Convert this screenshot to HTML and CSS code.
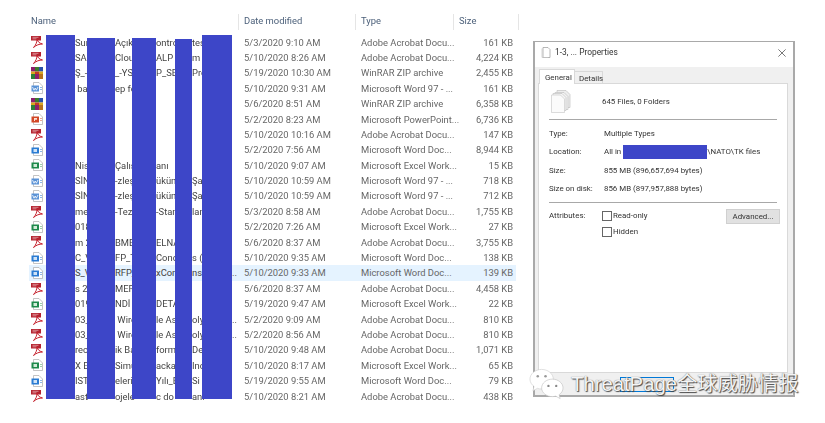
FILE: index.html
```html
<!DOCTYPE html>
<html lang="en">
<head>
	<meta charset="utf-8">
	<title>1-3, ... Properties</title>
	<link rel="stylesheet" href="styles.css">
</head>
<body>
	<svg class="defs" width="0" height="0">
		<symbol id="pdf" viewBox="0 0 12 12">
			<path d="M0 0h10v4.500H0z" fill="#b5232f"/>
			<path d="M1.500 1.300h6M1.500 2.800h4" stroke="#e8b4b8" stroke-width=".7"/>
			<path d="M6 3c0 3-1 6-3.500 8.500 3-2.500 5.500-3.500 9-3.500-3.500-1-4.500-2-5.500-5z" fill="none" stroke="#c4202c" stroke-width="1"/>
		</symbol>
		<symbol id="rar" viewBox="0 0 12 12">
			<path d="M0 0h4v4.500H0z" fill="#8c1f6e"/>
			<path d="M4 0h4v4.500H4z" fill="#3a7d2c"/>
			<path d="M8 0h4v4.500H8z" fill="#2a4fa8"/>
			<path d="M0 4.500h4v2.500H0zM8 4.500h4v2.500H8z" fill="#d9a521"/>
			<path d="M4 4.500h4v2.500H4z" fill="#c23a22"/>
			<path d="M0 7h4v5H0z" fill="#2d7f3a"/>
			<path d="M4 7h4v5H4z" fill="#8c1f6e"/>
			<path d="M8 7h4v5H8z" fill="#b8701c"/>
		</symbol>
		<symbol id="doc" viewBox="0 0 12 12">
			<path d="M2.500.500h5.500l3.500 3.500v7.500h-9z" fill="#fff" stroke="#aaa" stroke-width=".7"/>
			<path d="M.5 3.500h7.500v6H.5z" fill="#2b7cd3"/>
			<path d="M9 5h2v1H9zM9 7h2v1H9z" fill="#8db9e8"/>
			<path d="M2.500 5h3.500v3H2.500z" fill="#cfe3f7"/>
		</symbol>
		<symbol id="doc97" viewBox="0 0 12 12">
			<path d="M2.500.500h5.500l3.500 3.500v7.500h-9z" fill="#fff" stroke="#aaa" stroke-width=".7"/>
			<path d="M.5 3.500h7.500v6H.5z" fill="#5b93d6"/>
			<path d="M1.500 5l1.500 3.200 1.200-2.200 1.200 2.200L7 5" fill="none" stroke="#fff" stroke-width=".8"/>
			<path d="M9 5h2v1H9zM9 7h2v1H9z" fill="#8db9e8"/>
		</symbol>
		<symbol id="xls" viewBox="0 0 12 12">
			<path d="M2.500.500h5.500l3.500 3.500v7.500h-9z" fill="#fff" stroke="#aaa" stroke-width=".7"/>
			<path d="M.5 3.500h7.500v6H.5z" fill="#1f8a4c"/>
			<path d="M2.500 5h3.500v3H2.500z" fill="#d3ecd9"/>
			<path d="M9 5h2v1H9zM9 7h2v1H9z" fill="#9ccfa9"/>
		</symbol>
		<symbol id="ppt" viewBox="0 0 12 12">
			<path d="M2.500.500h5.500l3.500 3.500v7.500h-9z" fill="#fff" stroke="#aaa" stroke-width=".7"/>
			<path d="M.5 3.500h7.500v6H.5z" fill="#d24726"/>
			<path d="M3 5h3v1.700H4V8H3z" fill="#fbe0d8"/>
			<path d="M9 5h2v1H9zM9 7h2v1H9z" fill="#eba793"/>
		</symbol>
	</svg>

	<div class="page">
		<section class="explorer">
			<div class="heads">
				<div class="head">Name</div>
				<div class="head">Date modified</div>
				<div class="head">Type</div>
				<div class="head">Size</div>
			</div>

			<div class="row"><svg class="ico"><use href="#pdf"/></svg><div class="name"><span>Sur</span><span>Açıkl</span><span>ontrol</span><span>tes</span><span></span></div><div>5/3/2020 9:10 AM</div><div>Adobe Acrobat Docu...</div><div class="num">161 KB</div></div>
			<div class="row"><svg class="ico"><use href="#pdf"/></svg><div class="name"><span>SAN</span><span>Clou</span><span>ALP S</span><span>m</span><span></span></div><div>5/10/2020 8:26 AM</div><div>Adobe Acrobat Docu...</div><div class="num">4,224 KB</div></div>
			<div class="row"><svg class="ico"><use href="#rar"/></svg><div class="name"><span>Ş_-_</span><span>_-YSK</span><span>P_SEÇ</span><span>Pro</span><span></span></div><div>5/19/2020 10:30 AM</div><div>WinRAR ZIP archive</div><div class="num">2,455 KB</div></div>
			<div class="row"><svg class="ico"><use href="#doc97"/></svg><div class="name"><span>&nbsp;ba</span><span>ep fo</span><span></span><span></span><span></span></div><div>5/10/2020 9:31 AM</div><div>Microsoft Word 97 - ...</div><div class="num">161 KB</div></div>
			<div class="row"><svg class="ico"><use href="#rar"/></svg><div class="name"><span></span><span></span><span></span><span></span><span></span></div><div>5/6/2020 8:51 AM</div><div>WinRAR ZIP archive</div><div class="num">6,358 KB</div></div>
			<div class="row"><svg class="ico"><use href="#ppt"/></svg><div class="name"><span></span><span></span><span></span><span></span><span></span></div><div>5/2/2020 8:23 AM</div><div>Microsoft PowerPoint...</div><div class="num">6,736 KB</div></div>
			<div class="row"><svg class="ico"><use href="#pdf"/></svg><div class="name"><span></span><span></span><span></span><span></span><span></span></div><div>5/10/2020 10:16 AM</div><div>Adobe Acrobat Docu...</div><div class="num">147 KB</div></div>
			<div class="row"><svg class="ico"><use href="#doc"/></svg><div class="name"><span></span><span></span><span></span><span></span><span></span></div><div>5/2/2020 7:56 AM</div><div>Microsoft Word Doc...</div><div class="num">8,944 KB</div></div>
			<div class="row"><svg class="ico"><use href="#xls"/></svg><div class="name"><span>Nisa</span><span>Çalışm</span><span>anı</span><span></span><span></span></div><div>5/10/2020 9:07 AM</div><div>Microsoft Excel Work...</div><div class="num">15 KB</div></div>
			<div class="row"><svg class="ico"><use href="#doc97"/></svg><div class="name"><span>SİN</span><span>-zleşı</span><span>ükün</span><span>Şa</span><span></span></div><div>5/10/2020 10:59 AM</div><div>Microsoft Word 97 - ...</div><div class="num">718 KB</div></div>
			<div class="row"><svg class="ico"><use href="#doc97"/></svg><div class="name"><span>SİN</span><span>-zleşı</span><span>ükün</span><span>Şa</span><span></span></div><div>5/10/2020 10:59 AM</div><div>Microsoft Word 97 - ...</div><div class="num">712 KB</div></div>
			<div class="row"><svg class="ico"><use href="#pdf"/></svg><div class="name"><span>me</span><span>-Tez</span><span>-Stan</span><span>lan</span><span></span></div><div>5/3/2020 8:58 AM</div><div>Adobe Acrobat Docu...</div><div class="num">1,755 KB</div></div>
			<div class="row"><svg class="ico"><use href="#xls"/></svg><div class="name"><span>018</span><span></span><span></span><span></span><span></span></div><div>5/2/2020 7:26 AM</div><div>Microsoft Excel Work...</div><div class="num">27 KB</div></div>
			<div class="row"><svg class="ico"><use href="#pdf"/></svg><div class="name"><span>m 2</span><span>BME</span><span>ELNA</span><span></span><span></span></div><div>5/6/2020 8:37 AM</div><div>Adobe Acrobat Docu...</div><div class="num">3,755 KB</div></div>
			<div class="row"><svg class="ico"><use href="#doc"/></svg><div class="name"><span>C_V</span><span>FP_Te</span><span>Cond</span><span>s (</span><span></span></div><div>5/10/2020 9:35 AM</div><div>Microsoft Word Doc...</div><div class="num">138 KB</div></div>
			<div class="row hover"><svg class="ico"><use href="#doc"/></svg><div class="name"><span>S_V</span><span>RFP_T</span><span>xCon</span><span>ns</span><span>..</span></div><div>5/10/2020 9:33 AM</div><div>Microsoft Word Doc...</div><div class="num">139 KB</div></div>
			<div class="row"><svg class="ico"><use href="#pdf"/></svg><div class="name"><span>s 20</span><span>MER</span><span></span><span></span><span></span></div><div>5/6/2020 8:37 AM</div><div>Adobe Acrobat Docu...</div><div class="num">4,458 KB</div></div>
			<div class="row"><svg class="ico"><use href="#xls"/></svg><div class="name"><span>019</span><span>NDİ</span><span>DETAY</span><span></span><span></span></div><div>5/19/2020 9:47 AM</div><div>Microsoft Excel Work...</div><div class="num">22 KB</div></div>
			<div class="row"><svg class="ico"><use href="#pdf"/></svg><div class="name"><span>03_</span><span>&nbsp;Wire</span><span>le As</span><span>oly</span><span>..</span></div><div>5/2/2020 9:09 AM</div><div>Adobe Acrobat Docu...</div><div class="num">810 KB</div></div>
			<div class="row"><svg class="ico"><use href="#pdf"/></svg><div class="name"><span>03_</span><span>&nbsp;Wire</span><span>le As</span><span>oly</span><span>..</span></div><div>5/2/2020 8:56 AM</div><div>Adobe Acrobat Docu...</div><div class="num">810 KB</div></div>
			<div class="row"><svg class="ico"><use href="#pdf"/></svg><div class="name"><span>rece</span><span>ik Ba</span><span>forma</span><span>Değ</span><span></span></div><div>5/10/2020 9:48 AM</div><div>Adobe Acrobat Docu...</div><div class="num">1,071 KB</div></div>
			<div class="row"><svg class="ico"><use href="#xls"/></svg><div class="name"><span>X E</span><span>Simu</span><span>ackag</span><span>Inc</span><span></span></div><div>5/10/2020 8:17 AM</div><div>Microsoft Excel Work...</div><div class="num">65 KB</div></div>
			<div class="row"><svg class="ico"><use href="#doc"/></svg><div class="name"><span>IST</span><span>eleri_</span><span>Yılı_Bi</span><span>Si</span><span></span></div><div>5/19/2020 9:55 AM</div><div>Microsoft Word Doc...</div><div class="num">79 KB</div></div>
			<div class="row"><svg class="ico"><use href="#pdf"/></svg><div class="name"><span>ast</span><span>ojele</span><span>c do</span><span>ani</span><span></span></div><div>5/10/2020 8:21 AM</div><div>Adobe Acrobat Docu...</div><div class="num">438 KB</div></div>

			<!-- redaction bars over the names -->
			<i class="bar bar1"></i>
			<i class="bar bar2"></i>
			<i class="bar bar3"></i>
			<i class="bar bar4"></i>
			<i class="bar bar5"></i>
		</section>

		<section class="dialog">
			<div class="titlebar">
				<svg class="title-ico" viewBox="0 0 10 11"><path d="M2 .5h5l2 2v8H2z" fill="#fff" stroke="#9a9a9a" stroke-width=".7"/><path d="M1 1.500v9h6" fill="none" stroke="#c4c4c4" stroke-width=".7"/></svg>
				<span class="title">1-3, ... Properties</span>
				<svg class="close" viewBox="0 0 10 10"><path d="M.5.500l9 9M9.500.500l-9 9" stroke="#444" stroke-width=".9"/></svg>
			</div>
			<div class="tabs">
				<span class="tab active">General</span>
				<span class="tab">Details</span>
			</div>
			<div class="panel">
				<div class="summary">
					<svg class="files-ico" viewBox="0 0 20 23">
						<path d="M6 .5h9l4 4v13H6z" fill="#eee" stroke="#bbb" stroke-width=".6"/>
						<path d="M4 2.500h9l4 4v13H4z" fill="#f3f3f3" stroke="#bbb" stroke-width=".6"/>
						<path d="M2 3.500h9l4 4v13H2z" fill="#f6f6f6" stroke="#bbb" stroke-width=".6"/>
						<path d="M.5 5h9l4 4v13.500H.5z" fill="#fbfbfb" stroke="#c4c4c4" stroke-width=".6"/>
					</svg>
					<span>645 Files, 0 Folders</span>
				</div>
				<hr>
				<div class="props">
					<div class="prop"><span>Type:</span><span>Multiple Types</span></div>
					<div class="prop"><span>Location:</span><span class="loc">All in<i class="loc-bar"></i>\NATO\TK files</span></div>
					<div class="prop"><span>Size:</span><span>855 MB (896,657,694 bytes)</span></div>
					<div class="prop"><span>Size on disk:</span><span>856 MB (897,957,888 bytes)</span></div>
				</div>
				<hr>
				<div class="attrs">
					<span class="attr-label">Attributes:</span>
					<div class="checks">
						<label class="check"><i class="box"></i>Read-only</label>
						<label class="check"><i class="box"></i>Hidden</label>
					</div>
					<button class="advanced">Advanced...</button>
				</div>
			</div>
			<div class="footer">
				<span class="ok"></span>
			</div>
		</section>
	</div>

	<!-- account watermark pasted on top -->
	<div class="mark">
		<svg class="wechat" viewBox="0 0 36 32">
			<path d="M13 1C6.500 1 1 5.500 1 11c0 3 1.600 5.700 4.200 7.500L4 23l4.600-2.500c1.400.4 2.900.6 4.400.6 6.500 0 12-4.500 12-10.100S19.500 1 13 1z" fill="#fff" stroke="#ccc" stroke-width=".6"/>
			<path d="M24 11c-6 0-11 4-11 9s5 9 11 9c1.200 0 2.400-.2 3.500-.5L32 31l-1-4c2.500-1.700 4-4.200 4-7 0-5-5-9-11-9z" fill="#fff" stroke="#bbb" stroke-width=".6"/>
			<circle cx="9" cy="8" r="1.300" fill="#999"/><circle cx="17" cy="8" r="1.300" fill="#999"/>
			<circle cx="20" cy="18" r="1.200" fill="#888"/><circle cx="28" cy="18" r="1.200" fill="#888"/>
		</svg>
		<span class="mark-text">ThreatPage全球威胁情报</span>
	</div>
</body>
</html>
```

FILE: styles.css
```css
html, body {
	margin: 0;
	background: #fff;
}

body {
	position: relative;
	width: 825px;
	height: 423px;
	overflow: hidden;
	font: 9.4px/1 Roboto, "Liberation Sans", sans-serif;
	color: #444;
}

.defs {
	position: absolute;
}

.page {
	display: flex;
	align-items: flex-start;
	padding: 12px 0 0 29px;
	gap: 14px;
}

/* file list */
.explorer {
	position: relative;
	width: 490px;
	filter: blur(.4px);
}

.heads {
	display: grid;
	grid-template-columns: 210px 117px 98px 65px;
	height: 22.600px;
	color: #4c607a;
}

.head {
	height: 16px;
	margin-top: 2px;
	padding: 2px 0 0 5px;
	box-sizing: border-box;
	border-right: 1px solid #e5e5e5;
}

.head:first-child {
	padding-left: 2px;
}

.row {
	position: relative;
	display: grid;
	grid-template-columns: 210px 117px 98px 59px;
	align-items: center;
	width: 487px;
	height: 15.400px;
	color: #666;
	white-space: nowrap;
}

.row > div {
	padding-left: 5px;
}

.row > .num {
	padding: 0;
	text-align: right;
}

.row.hover {
	background: #e5f3ff;
}

.ico {
	position: absolute;
	left: 2px;
	top: 1.700px;
	width: 12px;
	height: 12px;
}

/* the five slots start in the gaps between the bars */
.row > .name {
	display: grid;
	grid-template-columns: 40px 41px 36px 40px 6px;
	margin-left: 46px;
	padding: 0;
	color: #444;
}

.bar {
	position: absolute;
	bottom: 5px;
	background: #3d46c8;
}

.bar1 { left: 17px; width: 29px; top: 23px; }
.bar2 { left: 58px; width: 28px; top: 26px; }
.bar3 { left: 103px; width: 24px; top: 26px; }
.bar4 { left: 146px; width: 17px; top: 27px; }
.bar5 { left: 173px; width: 30px; top: 23px; }

/* properties dialog */
.dialog {
	width: 258px;
	height: 353px;
	margin-top: 29px;
	display: flex;
	flex-direction: column;
	background: #f0f0f0;
	border: 2px solid #a9a9a9;
	border-top-width: 1px;
	filter: blur(.3px);
	font-size: 7.900px;
	color: #333;
}

.titlebar {
	display: flex;
	align-items: center;
	height: 21px;
	padding: 0 6px 4px;
	background: #fff;
	font-size: 8.400px;
}

.title-ico {
	width: 10px;
	height: 11px;
	margin-right: 4px;
}

.title {
	flex: 1;
}

.close {
	width: 8px;
	height: 8px;
	margin-right: 1px;
}

.tabs {
	display: flex;
	align-items: flex-end;
	height: 16px;
	padding-left: 4px;
}

.tab {
	width: 28px;
	height: 12px;
	padding: 3px 0 0 4px;
	box-sizing: border-box;
	background: #f0f0f0;
	border: 1px solid #d9d9d9;
	border-width: 1px 1px 0 0;
}

.tab.active {
	width: 36px;
	height: 15px;
	padding: 4px 0 0 5px;
	background: #fff;
	border-left-width: 1px;
	margin-bottom: -1px;
	position: relative;
	z-index: 1;
}

.panel {
	height: 288px;
	margin: 0 5px 0 3px;
	padding: 0 10px;
	background: #fff;
	border: 1px solid #d9d9d9;
}

.summary {
	display: flex;
	align-items: center;
	height: 35px;
	gap: 31px;
}

.files-ico {
	width: 20px;
	height: 23px;
	margin-left: 2px;
}

hr {
	height: 1px;
	margin: 0;
	border: 0;
	background: #a8a8a8;
}

.props {
	padding: 5px 0 4px;
}

.prop {
	display: grid;
	grid-template-columns: 55px 1fr;
	align-items: center;
	height: 18.300px;
}

.loc {
	display: flex;
	align-items: center;
}

.loc-bar {
	width: 84px;
	height: 14px;
	margin-left: 2px;
	background: #3d46c8;
}

.attrs {
	display: grid;
	grid-template-columns: 53px 1fr 54px;
	padding-top: 6px;
}

.attr-label {
	padding-top: 3px;
}

.checks {
	display: flex;
	flex-direction: column;
	gap: 6px;
	padding-top: 2px;
}

.check {
	display: flex;
	align-items: center;
	gap: 1px;
}

.box {
	width: 8px;
	height: 8px;
	background: #fff;
	border: 1px solid #666;
}

.advanced {
	width: 54px;
	height: 15px;
	margin-left: 3px;
	padding: 0;
	font: inherit;
	color: #333;
	background: #e1e1e1;
	border: 1px solid #d0d0d0;
}

.footer {
	flex: 1;
	padding: 4px 0 0 85px;
}

.ok {
	display: block;
	width: 52px;
	height: 13px;
	background: #e9e9e9;
	border: 1px solid #0078d7;
}

/* watermark */
.mark {
	position: absolute;
	left: 529px;
	top: 368px;
	display: flex;
	align-items: center;
	gap: 7px;
}

.wechat {
	width: 35px;
	height: 32px;
}

.mark-text {
	font: 20.300px/1 "Liberation Sans", "Noto Sans CJK SC", sans-serif;
	color: #f4f4f4;
	text-shadow: 1px 1px 1px #444, 0 0 1px #666;
}
```
